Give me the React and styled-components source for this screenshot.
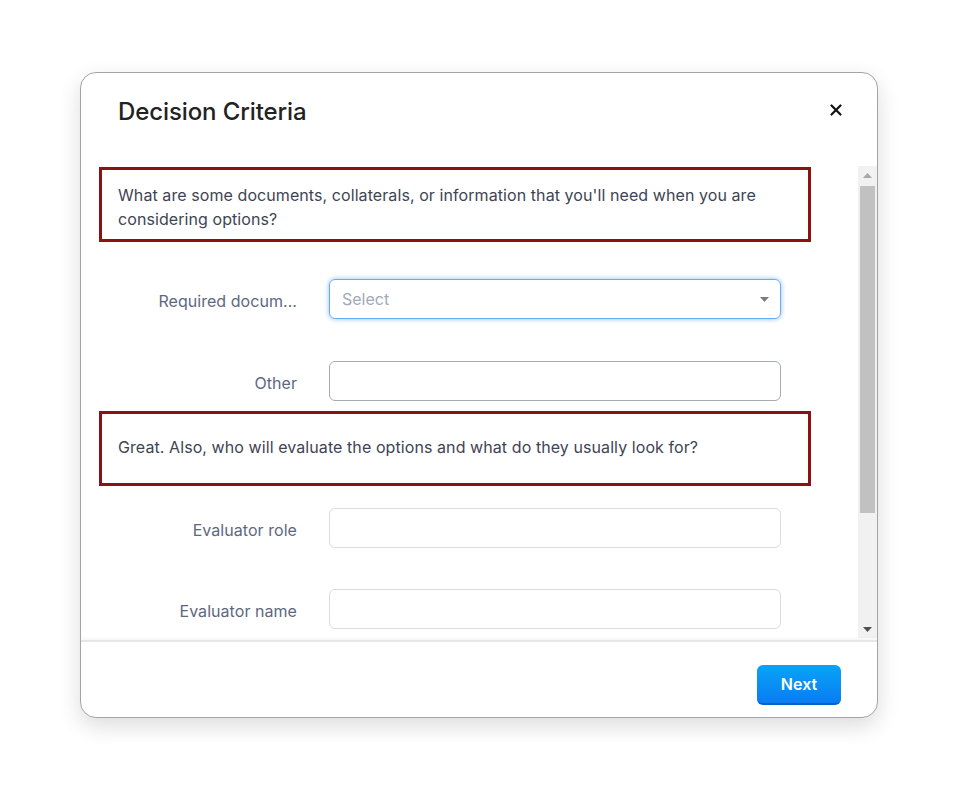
import React from "react";
import styled, { createGlobalStyle } from "styled-components";

const GlobalStyle = createGlobalStyle`
  body {
    margin: 0;
    background: #fff;
    font-family: Inter, "Noto Sans", "Liberation Sans", sans-serif;
  }
`;

function CloseIcon() {
  return (
    <svg width="12" height="12" viewBox="0 0 12 12">
      <path d="M1.5 1.5 L10.5 10.5 M10.5 1.5 L1.5 10.5" stroke="#111" strokeWidth="2.2" strokeLinecap="round" />
    </svg>
  );
}

function Caret({ color }) {
  return (
    <svg width="9" height="5" viewBox="0 0 9 5">
      <path d="M0 0 H9 L4.5 5 Z" fill={color} />
    </svg>
  );
}

function Field({ label, select, tone, top }) {
  return (
    <Row $top={top}>
      <Label>{label}</Label>
      <Input $tone={tone}>
        {select && (
          <>
            <span className="placeholder">Select</span>
            <Caret color="#7a7d83" />
          </>
        )}
      </Input>
    </Row>
  );
}

export default function App() {
  return (
    <Page>
      <GlobalStyle />
      <Modal>
        <Header>
          <Title>Decision Criteria</Title>
          <CloseButton>
            <CloseIcon />
          </CloseButton>
        </Header>

        <Body>
          <Content>
            <Prompt $top={1} $pad="5px 16px 0">
              What are some documents, collaterals, or information that you'll need when you are
              considering options?
            </Prompt>
            <Field label="Required docum..." select tone="focus" top={37} />
            <Field label="Other" tone="dark" top={42} />

            <Prompt $top={10} $pad="0 16px 3px">
              Great. Also, who will evaluate the options and what do they usually look for?
            </Prompt>
            <Field label="Evaluator role" tone="light" top={22} />
            <Field label="Evaluator name" tone="light" top={41} />
          </Content>

          <Scrollbar>
            <div className="arrow">
              <Caret color="#a8a8a8" />
            </div>
            <div className="thumb" />
            <div className="rest" />
            <div className="arrow down">
              <Caret color="#505050" />
            </div>
          </Scrollbar>
        </Body>

        <Footer>
          <NextButton>Next</NextButton>
        </Footer>
      </Modal>
    </Page>
  );
}

const Page = styled.div`
  padding: 72px 0 80px 80px;
`;

const Modal = styled.div`
  width: 798px;
  height: 646px;
  box-sizing: border-box;
  display: flex;
  flex-direction: column;
  background: #fff;
  border: 1px solid #a4a4a4;
  border-radius: 16px;
  box-shadow: 0 8px 22px rgba(0, 0, 0, 0.14);
  overflow: hidden;
`;

const Header = styled.div`
  height: 93px;
  flex-shrink: 0;
  display: flex;
  justify-content: space-between;
  align-items: flex-start;
  padding: 24px 35px 0 37px;
  box-sizing: border-box;
`;

const Title = styled.h2`
  margin: 0;
  font-size: 24px;
  line-height: 30px;
  font-weight: 500;
  color: #222;
  letter-spacing: -0.1px;
`;

const CloseButton = styled.div`
  width: 12px;
  height: 12px;
  margin-top: 7px;
  display: flex;
  cursor: pointer;
`;

const Body = styled.div`
  flex: 1;
  display: flex;
  min-height: 0;
`;

const Content = styled.div`
  flex: 1;
  overflow: hidden;
  padding-left: 18px;
  display: flex;
  flex-direction: column;
`;

const Prompt = styled.div`
  width: 712px;
  height: 75px;
  flex-shrink: 0;
  box-sizing: border-box;
  margin-top: ${(p) => p.$top}px;
  padding: ${(p) => p.$pad};
  border: 3px solid #8c1212;
  display: flex;
  align-items: center;
  font-size: 16px;
  line-height: 24px;
  letter-spacing: 0.08px;
  color: #3e4453;
`;

const Row = styled.div`
  display: flex;
  align-items: center;
  flex-shrink: 0;
  gap: 32px;
  margin-top: ${(p) => p.$top}px;
`;

const Label = styled.div`
  width: 198px;
  text-align: right;
  white-space: nowrap;
  padding-top: 3px;
  font-size: 16px;
  line-height: 22px;
  letter-spacing: 0.05px;
  color: #5d6880;
`;

const toneBorder = {
  focus: "#6aa9f4",
  dark: "#a6abb3",
  light: "#d9dde3",
};

const Input = styled.div`
  width: 452px;
  height: 40px;
  box-sizing: border-box;
  border: 1px solid ${(p) => toneBorder[p.$tone]};
  border-radius: 6px;
  box-shadow: ${(p) => (p.$tone === "focus" ? "0 0 5px rgba(60, 150, 245, 0.6)" : "none")};
  display: flex;
  align-items: center;
  justify-content: space-between;
  padding: 0 11px 0 12px;

  & .placeholder {
    font-size: 16px;
    color: #a2a9b7;
  }
`;

const Scrollbar = styled.div`
  width: 19px;
  flex-shrink: 0;
  margin-bottom: 2px;
  background: #f1f1f1;
  display: flex;
  flex-direction: column;

  & .arrow {
    height: 20px;
    display: flex;
    align-items: center;
    justify-content: center;
    transform: rotate(180deg);
  }
  & .arrow.down {
    transform: none;
    height: 18px;
  }
  & .thumb {
    height: 327px;
    margin: 0 2px;
    background: #c1c1c1;
  }
  & .rest {
    flex: 1;
  }
`;

const Footer = styled.div`
  height: 77px;
  flex-shrink: 0;
  box-sizing: border-box;
  border-top: 2px solid #e5e6e8;
  box-shadow: 0 -2px 3px rgba(0, 0, 0, 0.04);
  display: flex;
  justify-content: flex-end;
  align-items: flex-start;
  padding: 23px 36px 0 0;
`;

const NextButton = styled.button`
  width: 84px;
  height: 40px;
  border: none;
  border-bottom: 2px solid #0462cf;
  border-radius: 6px;
  background: linear-gradient(#08a4f7, #0a7cf2);
  color: #fff;
  font-family: inherit;
  font-size: 16px;
  font-weight: 600;
  cursor: pointer;
`;
